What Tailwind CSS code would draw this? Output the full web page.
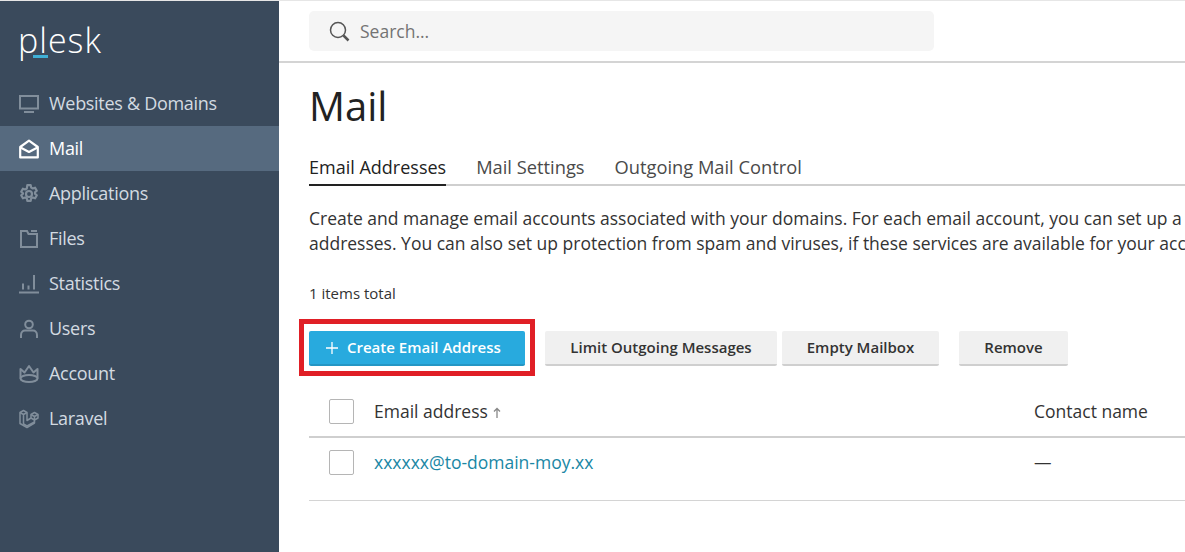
<!DOCTYPE html>
<html lang="en">
<head>
    <meta charset="UTF-8">
    <meta name="viewport" content="width=device-width, initial-scale=1.0">
    <title>Plesk - Mail</title>
    <script src="https://cdn.jsdelivr.net/npm/@tailwindcss/browser@4"></script>
</head>
<body class="bg-white font-['Open_Sans',sans-serif] text-[#222] h-[552px] w-[1185px] overflow-hidden flex">
    <!-- Sidebar -->
    <aside class="w-[279px] h-full shrink-0 bg-[#3a4a5c] border-t border-[#e6e6e6]">
        <div class="h-[80px] pl-[18px] pt-[14px]">
            <div class="relative w-[90px] h-[50px] text-[34px] leading-[50px] font-light text-white tracking-[1px]">plesk
                <span class="absolute left-[15px] top-[40px] w-[15px] h-[2.5px] bg-[#3fb0d6]"></span>
            </div>
        </div>
        <nav class="text-[18px] tracking-[-0.3px] text-[#d3dae1]">
            <a class="flex items-center h-[45px] pl-[19px] gap-[10px]">
                <svg class="w-[20px] h-[20px] text-[#818e9b]" viewBox="0 0 20 20" fill="none" stroke="currentColor" stroke-width="2"><rect x="1" y="2" width="18" height="12.5"/><path d="M5 18h10"/></svg>
                <span>Websites &amp; Domains</span>
            </a>
            <a class="flex items-center h-[45px] pl-[19px] gap-[10px] bg-[#566a7f] text-white">
                <svg class="w-[20px] h-[20px]" viewBox="0 0 20 20" fill="none" stroke="currentColor" stroke-width="2.2" stroke-linejoin="round"><path d="M1.2 8 10 1.6 18.8 8v10.4H1.2z"/><path d="M1.5 8.5 10 13l8.5-4.5"/></svg>
                <span>Mail</span>
            </a>
            <a class="flex items-center h-[45px] pl-[19px] gap-[10px]">
                <svg class="w-[20px] h-[20px] text-[#818e9b]" viewBox="0 0 20 20" fill="none" stroke="currentColor" stroke-width="2.2" stroke-linejoin="round"><path d="M8.3 1.2h3.4l.5 2.4 1.6.9 2.3-.8 1.7 3-1.8 1.6v1.4l1.8 1.6-1.7 3-2.3-.8-1.6.9-.5 2.4H8.3l-.5-2.4-1.6-.9-2.3.8-1.7-3 1.8-1.6V9.300L2.200 7.700l1.700-3 2.300.8 1.600-.9z"/><circle cx="10" cy="10" r="3"/></svg>
                <span>Applications</span>
            </a>
            <a class="flex items-center h-[45px] pl-[19px] gap-[10px]">
                <svg class="w-[20px] h-[20px] text-[#818e9b]" viewBox="0 0 20 20" fill="none" stroke="currentColor" stroke-width="2"><path d="M2 2v16h16V5H9.500L8 2z"/><path d="M12 2h6"/></svg>
                <span>Files</span>
            </a>
            <a class="flex items-center h-[45px] pl-[19px] gap-[10px]">
                <svg class="w-[20px] h-[20px] text-[#818e9b]" viewBox="0 0 20 20" fill="none" stroke="currentColor" stroke-width="2"><path d="M0 18.500h20M4 15.500v-6M9.500 15.500v-4M15 15.500V1"/></svg>
                <span>Statistics</span>
            </a>
            <a class="flex items-center h-[45px] pl-[19px] gap-[10px]">
                <svg class="w-[20px] h-[20px] text-[#818e9b]" viewBox="0 0 20 20" fill="none" stroke="currentColor" stroke-width="2"><circle cx="10" cy="5.500" r="3.800"/><path d="M2 19v-3c0-3 2-4.500 4-4.500h8c2 0 4 1.500 4 4.500v3"/></svg>
                <span>Users</span>
            </a>
            <a class="flex items-center h-[45px] pl-[19px] gap-[10px]">
                <svg class="w-[20px] h-[20px] text-[#818e9b]" viewBox="0 0 20 20" fill="none" stroke="currentColor" stroke-width="2" stroke-linejoin="round"><path d="M1.500 14.500V5l4 3.500L10 2l4.500 6.500 4-3.500v9.500"/><ellipse cx="10" cy="14.500" rx="8.500" ry="3.500"/></svg>
                <span>Account</span>
            </a>
            <a class="flex items-center h-[45px] pl-[19px] gap-[10px]">
                <svg class="w-[20px] h-[20px] text-[#818e9b]" viewBox="0 0 20 20" fill="none" stroke="currentColor" stroke-width="1.500" stroke-linejoin="round"><path d="M1 3.500 4.500 1.500 8 3.500V11.500L12 9V5.500L15.500 3.500 19 5.500V9L15.500 11V14L8 18.500 1 14.500Z"/><path d="M1 3.500 4.500 5.500 8 3.500M4.500 5.500V15L8 17 15.500 13M12 5.500 15.500 7.500 19 5.500M15.500 7.500V11M12 9 15.500 11"/></svg>
                <span>Laravel</span>
            </a>
        </nav>
    </aside>

    <!-- Main -->
    <main class="flex-1 min-w-0 overflow-hidden">
        <header class="h-[63px] pl-[30px] pt-[10px] border-t border-[#e6e6e6] border-b-2 border-b-[#d4d4d4]">
            <div class="flex items-center w-[625px] h-[40px] bg-[#f5f5f5] rounded-[5px] pl-[20px] gap-[10px] text-[17.5px] text-[#737373]">
                <svg class="w-[21px] h-[21px] text-[#555]" viewBox="0 0 21 21" fill="none" stroke="currentColor" stroke-width="1.500"><circle cx="9" cy="9" r="7.500"/><path d="m14.500 14.500 5 5" stroke-width="2.500"/></svg>
                <span>Search...</span>
            </div>
        </header>

        <div class="pl-[30px]">
            <h1 class="mt-[15px] text-[40px] leading-[56px] text-[#222]">Mail</h1>

            <div class="mt-[16px] flex gap-[30px] border-b-2 border-[#cfcfcf] text-[18.3px] leading-[34px] h-[36px] text-[#4a4a4a] whitespace-nowrap">
                <span class="h-[36px] border-b-2 border-[#222] text-[#222] text-[18px] font-medium">Email Addresses</span>
                <span>Mail Settings</span>
                <span>Outgoing Mail Control</span>
            </div>

            <div class="mt-[20px] text-[17.5px] leading-[25px] text-[#333] whitespace-nowrap">
                <p>Create and manage email accounts associated with your domains. For each email account, you can set up a</p>
                <p>addresses. You can also set up protection from spam and viruses, if these services are available for your account.</p>
            </div>

            <p class="mt-[27px] text-[15px] leading-[20px] text-[#333]">1 items total</p>

            <div class="mt-[16px] flex items-start text-[15px] font-semibold text-[#333] whitespace-nowrap">
                <div class="-ml-[10px] pt-[7px] px-[5px] pb-[5px] border-[5px] border-[#e01f26]">
                    <button class="flex items-center w-[216px] h-[35px] pl-[17px] gap-[9px] bg-[#28aade] border-b-2 border-[#2496c4] rounded-[2px] text-white">
                        <svg class="w-[12px] h-[12px]" viewBox="0 0 12 12" fill="none" stroke="currentColor" stroke-width="1.300"><path d="M6 0v12M0 6h12"/></svg>
                        <span>Create Email Address</span>
                    </button>
                </div>
                <button class="ml-[10px] mt-[12px] w-[232px] h-[35px] bg-[#f0f0f0] border-b-2 border-[#cfcfcf] rounded-[2px]">Limit Outgoing Messages</button>
                <button class="ml-[5px] mt-[12px] w-[157px] h-[35px] bg-[#f0f0f0] border-b-2 border-[#cfcfcf] rounded-[2px]">Empty Mailbox</button>
                <button class="ml-[20px] mt-[12px] w-[109px] h-[35px] bg-[#f0f0f0] border-b-2 border-[#cfcfcf] rounded-[2px]">Remove</button>
            </div>

            <!-- Table -->
            <div class="mt-[10px] text-[17.5px] text-[#333] whitespace-nowrap">
                <div class="flex items-center h-[52px] border-b-2 border-[#cfcfcf]">
                    <span class="ml-[20px] w-[25px] h-[25px] border border-[#b5b5b5] rounded-[2px] bg-white"></span>
                    <span class="ml-[20px] w-[660px] flex items-center gap-[5px]">Email address
                        <svg class="w-[8px] h-[11px] mt-[2px] text-[#888]" viewBox="0 0 8 11" fill="none" stroke="currentColor" stroke-width="1.300"><path d="M4 11V1.500M1 4.500l3-3 3 3"/></svg>
                    </span>
                    <span>Contact name</span>
                </div>
                <div class="flex items-center h-[63px] border-b border-[#d4d4d4] pb-[13px]">
                    <span class="ml-[20px] w-[25px] h-[25px] border border-[#b5b5b5] rounded-[2px] bg-white"></span>
                    <a class="ml-[20px] w-[660px] text-[#1a87a5]">xxxxxx@to-domain-moy.xx</a>
                    <span>—</span>
                </div>
            </div>
        </div>
    </main>
</body>
</html>
